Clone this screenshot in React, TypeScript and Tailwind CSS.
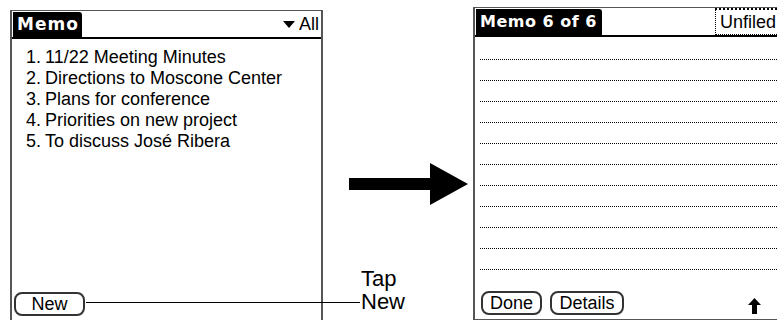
import React from "react";

const labels = [
  "11/22 Meeting Minutes",
  "Directions to Moscone Center",
  "Plans for conference",
  "Priorities on new project",
  "To discuss José Ribera",
];

const font = { fontFamily: '"Liberation Sans", Arial, sans-serif' };

function PalmButton({ label, w }: { label: string; w: string }) {
  return (
    <div
      className={`${w} h-[24px] border-2 border-[#333] rounded-[8px] flex items-center justify-center text-[18px] leading-none text-black bg-white`}
    >
      {label}
    </div>
  );
}

export default function App() {
  return (
    <div
      className="relative w-[777px] h-[320px] bg-white overflow-hidden flex items-start text-black"
      style={font}
    >
      {/* Left screen */}
      <div className="ml-[10px] mt-[10px] w-[313px] h-[310px] flex flex-col border-l-2 border-r-2 border-t border-[#555]">
        <div className="h-[26px] flex items-start">
          <div className="ml-[1px] mt-[1px] w-[69px] h-[25px] bg-black rounded-tr-[3px] flex items-center pl-[4px]">
            <span
              className="text-white text-[17px] font-bold tracking-[1px] leading-none"
              style={{ fontFamily: '"DejaVu Sans", sans-serif' }}
            >
              Memo
            </span>
          </div>
          <div className="flex-1" />
          <div className="h-[26px] flex items-center pr-[2px] gap-[4px]">
            <svg width="12" height="7" viewBox="0 0 12 7">
              <polygon points="0,0 12,0 6,7" fill="black" />
            </svg>
            <span className="text-[18px] leading-none">All</span>
          </div>
        </div>
        <div className="h-[2px] bg-black" />
        <div className="pt-[8px] flex flex-col">
          {labels.map((t, i) => (
            <div key={i} className="h-[21px] flex items-center text-[18px] leading-[21px]">
              <span className="w-[29px] text-right">{i + 1}.</span>
              <span className="ml-[4px]">{t}</span>
            </div>
          ))}
        </div>
        <div className="flex-1" />
        <div className="ml-[2px] mb-[4px]">
          <PalmButton label="New" w="w-[71px]" />
        </div>
      </div>

      {/* Middle: arrow + label */}
      <div className="w-[150px] h-[320px] flex flex-col">
        <svg className="ml-[26px] mt-[163px]" width="119" height="42" viewBox="0 0 119 42">
          <polygon points="0,15 81,15 81,0 119,21 81,42 81,27 0,27" fill="black" />
        </svg>
        <div className="ml-[38px] mt-[62px] text-[22px] leading-[23px]">
          <div>Tap</div>
          <div>New</div>
        </div>
      </div>

      {/* Right screen */}
      <div className="mt-[7px] w-[304px] h-[313px] flex flex-col border-l-2 border-t border-b border-[#555]">
        <div className="h-[27px] flex items-start">
          <div className="ml-[1px] mt-[1px] w-[126px] h-[26px] bg-black rounded-tr-[3px] flex items-center pl-[4px]">
            <span
              className="text-white text-[16px] font-bold tracking-[0.5px] leading-none whitespace-nowrap"
              style={{ fontFamily: '"DejaVu Sans", sans-serif' }}
            >
              Memo 6 of 6
            </span>
          </div>
          <div className="flex-1" />
          <div className="w-[62px] h-[27px] border-l border-t-2 border-b border-dotted border-black flex items-center pl-[4px] overflow-hidden">
            <span className="text-[18px] leading-none whitespace-nowrap">Unfiled</span>
          </div>
        </div>
        <div className="h-[2px] bg-black" />
        <div className="pt-[2px] ml-[5px] flex flex-col">
          {Array.from({ length: 11 }).map((_, i) => (
            <div key={i} className="h-[21px] border-b border-dotted border-black" />
          ))}
        </div>
        <div className="flex-1" />
        <div className="ml-[6px] mb-[4px] flex items-center gap-[8px]">
          <PalmButton label="Done" w="w-[61px]" />
          <PalmButton label="Details" w="w-[74px]" />
          <div className="flex-1" />
          <svg className="mr-[16px] mt-[6px]" width="13" height="16" viewBox="0 0 13 16">
            <polygon points="6.5,0 13,7 9,7 9,16 4,16 4,7 0,7" fill="black" />
          </svg>
        </div>
      </div>

      {/* Callout line from New button */}
      <div className="absolute left-[86px] top-[302px] w-[274px] h-[1px] bg-black" />
    </div>
  );
}
